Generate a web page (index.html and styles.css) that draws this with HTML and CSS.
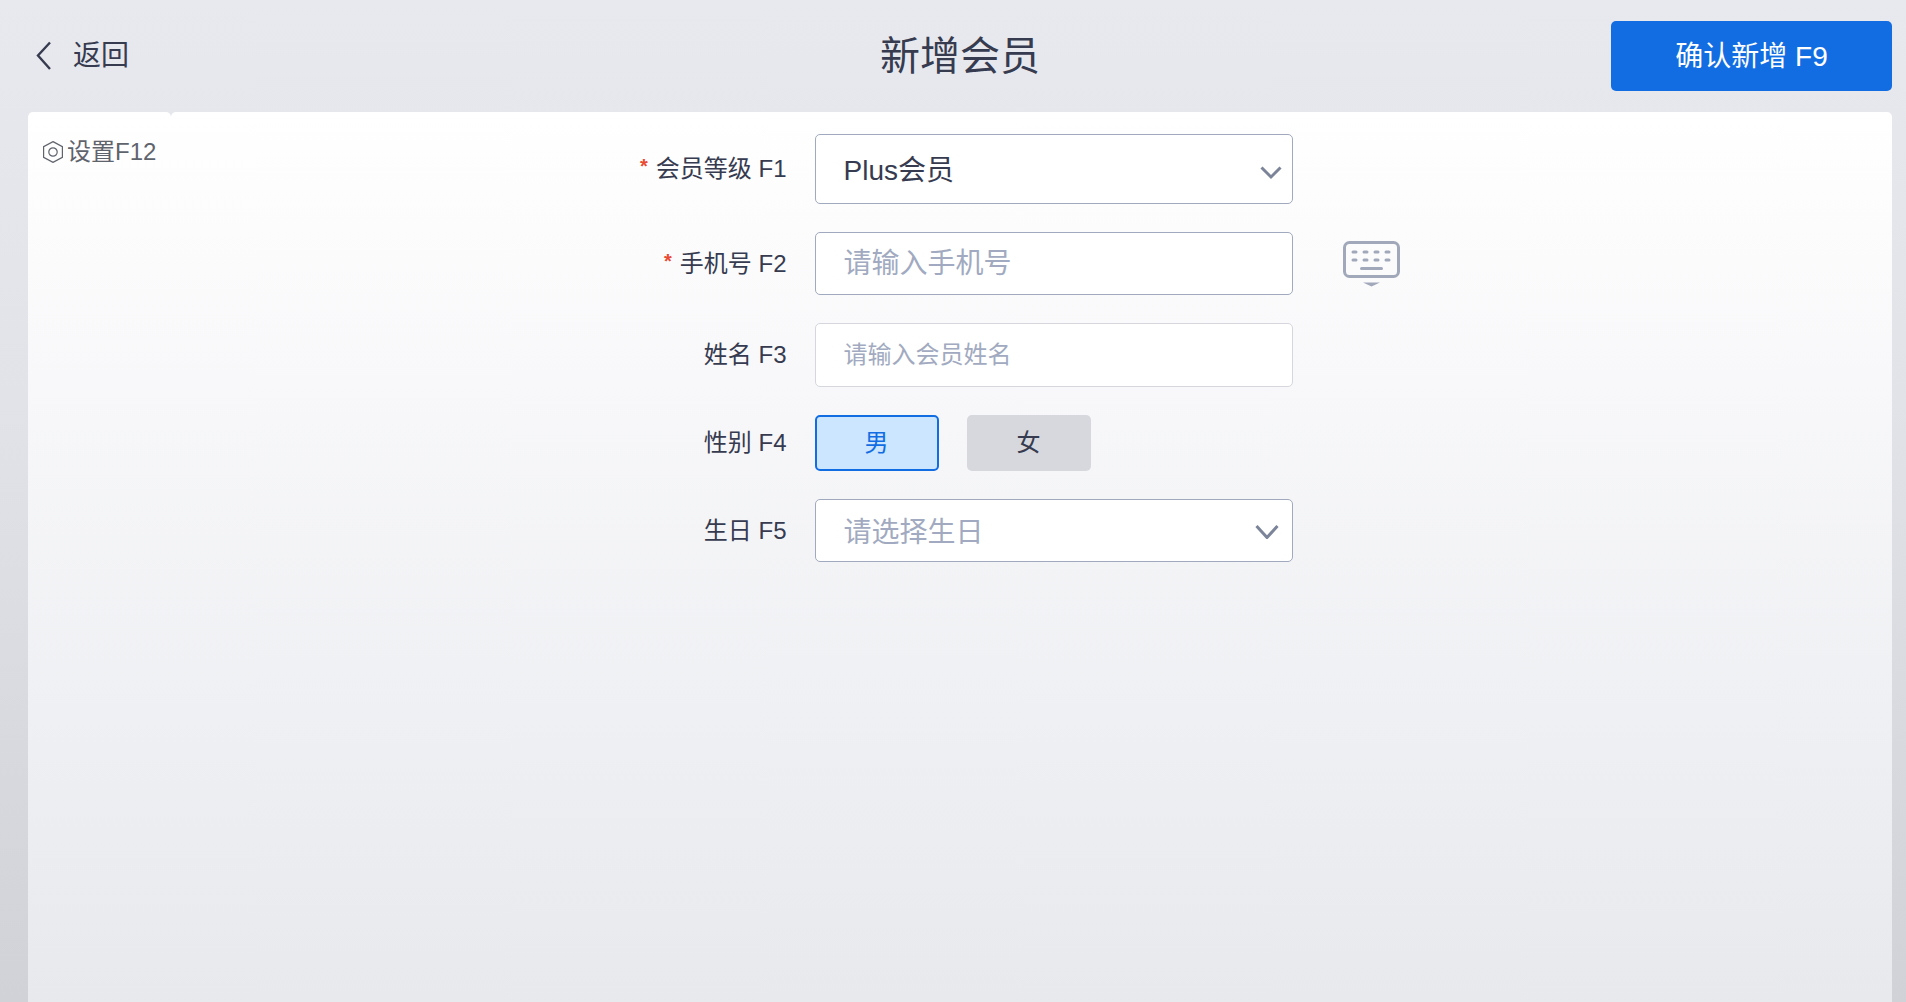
FILE: index.html
```html
<!DOCTYPE html>
<html lang="zh-CN">
<head>
    <meta charset="UTF-8">
    <meta name="viewport" content="width=device-width, initial-scale=1.0">
    <title>新增会员</title>
    <link rel="stylesheet" href="styles.css">
</head>
<body>
    <header class="page-header">
        <a class="back-link" href="#">
            <svg class="back-icon" viewBox="0 0 16 30" aria-hidden="true">
                <path d="M14 1.5 L2 14.5 L14 28"/>
            </svg>
            <span>返回</span>
        </a>
        <h1>新增会员</h1>
        <button type="submit" form="member-form" class="confirm-button">确认新增 F9</button>
    </header>
    <div class="container">
        <aside class="sidebar">
            <button type="button" class="settings-button">
                <svg class="settings-icon" viewBox="0 0 20 22" aria-hidden="true">
                    <path d="M10 0.6 L19.4 5.6 V16.4 L10 21.4 L0.6 16.4 V5.6 Z"/>
                    <circle cx="10" cy="11" r="4.2"/>
                </svg>
                <span>设置F12</span>
            </button>
        </aside>
        <main class="content">
            <form id="member-form" class="member-form">
                <div class="form-row">
                    <label class="form-label required" for="level">会员等级 F1</label>
                    <div class="field select-field">
                        <select id="level" class="control control-large" name="level">
                            <option>Plus会员</option>
                        </select>
                        <svg class="arrow arrow-small" viewBox="0 0 22 14" aria-hidden="true">
                            <path d="M1.5 1.5 L11 11 L20.5 1.5"/>
                        </svg>
                    </div>
                </div>
                <div class="form-row">
                    <label class="form-label required" for="phone">手机号 F2</label>
                    <div class="field">
                        <input type="tel" id="phone" class="control" name="phone" placeholder="请输入手机号">
                    </div>
                    <button type="button" class="keyboard-button" aria-label="软键盘">
                        <svg class="keyboard-icon" viewBox="0 0 57 46" aria-hidden="true">
                            <rect x="1.5" y="1.5" width="54" height="34" rx="5"/>
                            <path d="M10 11 h3 M21 11 h3 M32 11 h3 M43 11 h3 M10 19 h3 M21 19 h3 M32 19 h3 M43 19 h3 M18.5 27.5 h20"/>
                            <polygon points="20,41.5 37,41.5 28.5,45.5"/>
                        </svg>
                    </button>
                </div>
                <div class="form-row">
                    <label class="form-label" for="name">姓名 F3</label>
                    <div class="field">
                        <input type="text" id="name" class="control control-light" name="name" placeholder="请输入会员姓名">
                    </div>
                </div>
                <div class="form-row" role="radiogroup" aria-labelledby="gender-label">
                    <span class="form-label" id="gender-label">性别 F4</span>
                    <div class="field gender-options">
                        <label class="gender-option">
                            <input type="radio" name="gender" value="male" checked>
                            <span>男</span>
                        </label>
                        <label class="gender-option">
                            <input type="radio" name="gender" value="female">
                            <span>女</span>
                        </label>
                    </div>
                </div>
                <div class="form-row">
                    <label class="form-label" for="birthday">生日 F5</label>
                    <div class="field select-field">
                        <select id="birthday" class="control is-empty" name="birthday">
                            <option value="">请选择生日</option>
                        </select>
                        <svg class="arrow" viewBox="0 0 24 14" aria-hidden="true">
                            <path d="M1.5 1 L12 12.5 L22.5 1"/>
                        </svg>
                    </div>
                </div>
            </form>
        </main>
    </div>
</body>
</html>
```

FILE: styles.css
```css
* {
    box-sizing: border-box;
}
body {
    display: flex;
    flex-direction: column;
    min-height: 100vh;
    margin: 0;
    font-family: "Liberation Sans", "Noto Sans CJK SC", sans-serif;
    font-size: 24px;
    color: #363b50;
    background: linear-gradient(#e8e9ee, #e2e3e9 40%, #d0d2d8);
}
button, input, select {
    font-family: inherit;
    color: inherit;
}
button {
    cursor: pointer;
}

/* Header */
.page-header {
    display: grid;
    grid-template-columns: 1fr auto 1fr;
    align-items: center;
    height: 112px;
    padding: 0 14px 0 28px;
}
.page-header h1 {
    margin: 0;
    font-size: 40px;
    font-weight: normal;
    line-height: 56px;
}
.back-link {
    display: flex;
    align-items: center;
    gap: 21px;
    padding-left: 8px;
    font-size: 28px;
    line-height: 42px;
    color: inherit;
    text-decoration: none;
}
.back-icon {
    width: 16px;
    height: 30px;
    fill: none;
    stroke: #363b50;
    stroke-width: 2.4;
}
.confirm-button {
    justify-self: end;
    width: 281px;
    height: 70px;
    padding: 0 0 4px;
    border: none;
    border-radius: 5px;
    font-size: 28px;
    color: white;
    background-color: #126de3;
}

/* Panels */
.container {
    flex: 1;
    display: flex;
    padding: 0 14px 0 28px;
}
.sidebar, .content {
    border-radius: 5px 5px 0 0;
    background: linear-gradient(#fff, #f8f8fa 30%, #e7e9ed);
}
.sidebar {
    width: 143px;
    padding: 24px 0 0 15px;
}
.content {
    flex: 1;
    padding-top: 22px;
}
.settings-button {
    display: flex;
    align-items: center;
    gap: 4px;
    padding: 0;
    border: none;
    font-size: 24px;
    line-height: 32px;
    white-space: nowrap;
    color: #5f636c;
    background: none;
}
.settings-icon {
    width: 20px;
    height: 22px;
    fill: none;
    stroke: #5f636c;
    stroke-width: 1.2;
}

/* Form */
.member-form {
    display: flex;
    flex-direction: column;
    gap: 28px;
    width: 794px;
    margin: 0 auto;
}
.form-row {
    display: grid;
    grid-template-columns: 180px 478px 1fr;
    align-items: center;
}
.form-label {
    padding-right: 28px;
    line-height: 32px;
    text-align: right;
    white-space: nowrap;
}
.required::before {
    content: "*";
    margin-right: 8px;
    font-size: 20px;
    font-weight: bold;
    vertical-align: 4px;
    line-height: 1;
    color: #ea4a32;
}
.control {
    display: block;
    width: 100%;
    height: 63px;
    padding: 0 28px;
    border: 1px solid #a1a9be;
    border-radius: 5px;
    font-size: 28px;
    background-color: white;
    appearance: none;
}
.control-large {
    height: 70px;
}
.control-light {
    height: 64px;
    border-color: #d5d7dc;
    font-size: 24px;
}
.control::placeholder {
    color: #a1aac0;
    opacity: 1;
}
.is-empty {
    color: #a1aac0;
}
.select-field {
    position: relative;
}
.select-field .control {
    padding-top: 3px;
}
.arrow {
    position: absolute;
    top: 26px;
    right: 14px;
    width: 24px;
    height: 14px;
    fill: none;
    stroke: #7b8499;
    stroke-width: 3;
    pointer-events: none;
}
.arrow-small {
    top: 32px;
    right: 11px;
    width: 22px;
}
.gender-options {
    display: flex;
    gap: 28px;
}
.gender-option {
    position: relative;
    cursor: pointer;
}
.gender-option input {
    position: absolute;
    opacity: 0;
}
.gender-option span {
    display: block;
    width: 124px;
    height: 56px;
    border-radius: 5px;
    line-height: 56px;
    text-align: center;
    background-color: #d7d8dd;
}
.gender-option input:checked + span {
    border: 2px solid #126de3;
    line-height: 52px;
    color: #126de3;
    background-color: #cce6ff;
}
.keyboard-button {
    justify-self: start;
    margin-left: 50px;
    padding: 0;
    border: none;
    background: none;
}
.keyboard-icon {
    display: block;
    width: 57px;
    height: 46px;
    fill: none;
    stroke: #a1a8ba;
    stroke-width: 3;
    stroke-linecap: round;
}
.keyboard-icon polygon {
    fill: #a1a8ba;
    stroke: none;
}
```
